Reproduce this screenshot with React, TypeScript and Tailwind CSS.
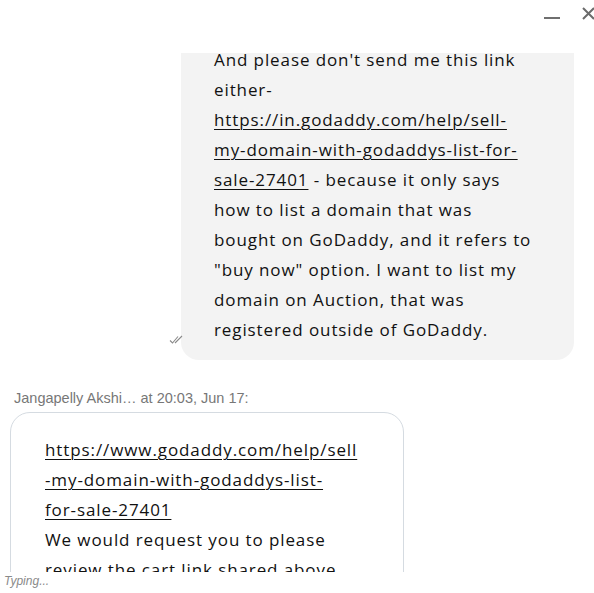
import { ReactNode } from 'react'

function Link({ children }: { children: ReactNode }) {
  return <span className="underline decoration-1 underline-offset-[3px]">{children}</span>
}

function CheckMarks() {
  return (
    <svg width="15" height="9" viewBox="0 0 15 9" className="absolute -left-[12px] bottom-[16px]">
      <path d="M1 5.5 L3.5 8 L9 1.5" fill="none" stroke="#8a8a8a" strokeWidth="1.1" />
      <path d="M6 8 L13 1" fill="none" stroke="#8a8a8a" strokeWidth="1.1" />
    </svg>
  )
}

function Header() {
  return (
    <div className="flex h-[53px] shrink-0 justify-end">
      <div className="mr-[22px] mt-[17px] h-[2px] w-[16px] bg-[#6f6f6f]" />
      <svg width="13" height="13" viewBox="0 0 13 13" className="-mr-[1px] mt-[7px]">
        <path d="M1 1 L12 12 M12 1 L1 12" stroke="#6b6b6b" strokeWidth="2" />
      </svg>
    </div>
  )
}

export default function App() {
  return (
    <div className="flex h-[593px] w-[594px] flex-col overflow-hidden bg-white text-[#111]">
      <Header />

      <div className="flex-1 overflow-hidden">
        <div className="-mt-[20px] flex flex-col font-['Open_Sans',sans-serif] text-[17px] leading-[30px] tracking-[0.9px]">
          <div className="flex justify-end pr-[20px]">
            <div className="relative w-[393px] rounded-b-[18px] bg-[#f3f3f3] px-[33px] pb-[15px] pt-[12px]">
              <CheckMarks />
              <p>
                And please don't send me this link
                <br />
                either-
                <br />
                <Link>
                  https://in.godaddy.com/help/sell-
                  <br />
                  my-domain-with-godaddys-list-for-
                  <br />
                  sale-27401
                </Link>{' '}
                - because it only says
                <br />
                how to list a domain that was
                <br />
                bought on GoDaddy, and it refers to
                <br />
                "buy now" option. I want to list my
                <br />
                domain on Auction, that was
                <br />
                registered outside of GoDaddy.
              </p>
            </div>
          </div>

          <div className="ml-[14px] mt-[30px] font-['Liberation_Sans',sans-serif] text-[14.5px] leading-[16px] tracking-normal text-[#777]">
            Jangapelly Akshi… at 20:03, Jun 17:
          </div>

          <div className="ml-[10px] mt-[6px] w-[394px] rounded-[20px] border border-[#d5dbe1] px-[34px] pb-[16px] pt-[22px]">
            <p>
              <Link>
                https://www.godaddy.com/help/sell
                <br />
                -my-domain-with-godaddys-list-
                <br />
                for-sale-27401
              </Link>
              <br />
              We would request you to please
              <br />
              review the cart link shared above
              <br />
              and let us know if you need more help.
            </p>
          </div>
        </div>
      </div>

      <div className="h-[21px] shrink-0 pl-[4px] font-['Liberation_Sans',sans-serif] text-[12px] italic leading-[18px] text-[#8a8a8a]">
        Typing...
      </div>
    </div>
  )
}
